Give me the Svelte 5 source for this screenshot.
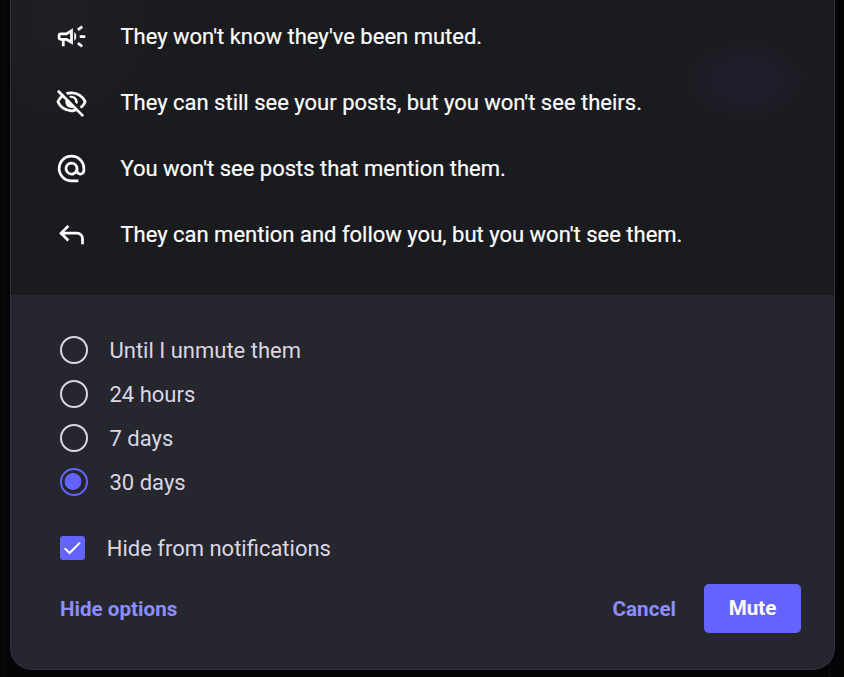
<script lang="ts">
  interface Info {
    text: string
    path: string
  }

  const infos: Info[] = [
    {
      text: "They won't know they've been muted.",
      path: 'M720-440v-80h160v80H720Zm48 280-128-96 48-64 128 96-48 64Zm-80-480-48-64 128-96 48 64-128 96ZM200-200v-160h-40q-33 0-56.5-23.5T80-440v-80q0-33 23.5-56.5T160-600h160l200-120v480L320-360h-40v160h-80Zm240-182v-196l-98 58H160v80h182l98 58Zm120 36v-268q27 24 43.5 58.5T620-480q0 41-16.5 75.5T560-346Z',
    },
    {
      text: "They can still see your posts, but you won't see theirs.",
      path: 'm644-428-58-58q9-47-27-88t-93-32l-58-58q17-8 34.5-12t37.5-4q75 0 127.5 52.5T660-500q0 20-4 37.5T644-428Zm128 126-58-56q38-29 67.5-63.5T832-500q-50-101-143.5-160.5T480-720q-29 0-57 4t-55 12l-62-62q41-17 84-25.5t90-8.5q151 0 269 83.5T920-500q-23 59-60.5 109.5T772-302Zm20 246L624-222q-35 11-70.5 16.5T480-200q-151 0-269-83.5T40-500q21-53 53-98.5t73-81.5L56-792l56-56 736 736-56 56ZM222-624q-29 26-53 57t-41 67q50 101 143.5 160.5T480-280q20 0 39-2.5t39-5.5l-36-38q-11 3-21 4.5t-21 1.5q-75 0-127.5-52.5T300-500q0-11 1.5-21t4.5-21l-84-82Z',
    },
    {
      text: "You won't see posts that mention them.",
      path: 'M480-80q-83 0-156-31.5T197-197q-54-54-85.5-127T80-480q0-83 31.5-156T197-763q54-54 127-85.5T480-880q83 0 156 31.5T763-763q54 54 85.5 127T880-480v58q0 59-40.5 100.5T740-280q-35 0-66-15t-52-43q-29 29-65.5 43.5T480-280q-83 0-141.5-58.5T280-480q0-83 58.5-141.5T480-680q83 0 141.5 58.5T680-480v58q0 26 17 44t43 18q26 0 43-18t17-44v-58q0-134-93-227t-227-93q-134 0-227 93t-93 227q0 134 93 227t227 93h200v80H480Zm0-280q50 0 85-35t35-85q0-50-35-85t-85-35q-50 0-85 35t-35 85q0 50 35 85t85 35Z',
    },
    {
      text: "They can mention and follow you, but you won't see them.",
      path: 'M760-200v-160q0-50-35-85t-85-35H273l144 144-57 56-240-240 240-240 57 56-144 144h367q83 0 141.5 58.5T840-360v160h-80Z',
    },
  ]

  const durations = ['Until I unmute them', '24 hours', '7 days', '30 days']

  let duration = $state('30 days')
  let hideNotifications = $state(true)
</script>

<div class="backdrop">
  <div class="modal">
    <div class="modal-top">
      {#each infos as info (info.text)}
        <div class="info">
          <svg viewBox="0 -960 960 960" aria-hidden="true"><path d={info.path} /></svg>
          <div>{info.text}</div>
        </div>
      {/each}
    </div>

    <div class="modal-bottom">
      <div class="durations">
        {#each durations as item}
          <label class="radio">
            <input type="radio" name="duration" value={item} bind:group={duration} />
            <span>{item}</span>
          </label>
        {/each}
      </div>

      <label class="checkbox">
        <input type="checkbox" bind:checked={hideNotifications} />
        <span class="box">
          {#if hideNotifications}
            <svg viewBox="0 0 25 24" aria-hidden="true"><path d="M4.7 12.3 9.6 17 20 6.6" /></svg>
          {/if}
        </span>
        <span>Hide from notifications</span>
      </label>

      <div class="actions">
        <button class="link">Hide options</button>
        <div class="spacer"></div>
        <button class="link">Cancel</button>
        <button class="primary">Mute</button>
      </div>
    </div>
  </div>
</div>

<style>
  :global(body) {
    background: #050507;
  }

  .backdrop {
    box-sizing: border-box;
    height: 677px;
    margin: 0 14px 0 4px;
    padding: 0 0 7px 5px;
    border: solid #0d0d11;
    border-width: 0 1px;
    font-family: Roboto, sans-serif;
    font-size: 22px;
    line-height: 33px;
  }

  .modal {
    box-sizing: border-box;
    display: flex;
    flex-direction: column;
    width: 825px;
    height: 670px;
    overflow: hidden;
    border: 1px solid #323042;
    border-top: 0;
    border-radius: 0 0 22px 22px;
    background: #26262f;
  }

  .modal-top {
    box-sizing: border-box;
    display: flex;
    flex-direction: column;
    gap: 33px;
    height: 295px;
    padding: 20px 44px;
    color: #fff;
    background:
      radial-gradient(ellipse 74px 48px at 735px 80px, #1f1d2c 0%, #1f1d2ccc 45%, #1f1d2c40 75%, transparent 100%),
      radial-gradient(ellipse 130px 140px at 50px 20px, #201e22, transparent),
      #1a1b1f;
  }

  .info {
    display: flex;
    align-items: center;
    gap: 32.4px;
    height: 33px;
    -webkit-text-stroke: 0.2px;
  }

  .info svg {
    width: 33px;
    height: 33px;
    fill: currentColor;
  }

  .modal-bottom {
    flex: 1;
    padding: 33px 33px 0 49px;
    color: #dad6e4;
  }

  .durations {
    display: flex;
    flex-direction: column;
  }

  .radio {
    display: flex;
    align-items: center;
    gap: 21.5px;
    height: 44px;
  }

  .radio input {
    appearance: none;
    box-sizing: border-box;
    width: 28px;
    height: 28px;
    margin: 0;
    border: 2px solid #dad6e4;
    border-radius: 50%;
  }

  .radio input:checked {
    border-color: #6364ff;
    background: radial-gradient(circle 9px at 11px 11.5px, #6364ff 8px, transparent 8.7px);
  }

  .checkbox {
    display: flex;
    align-items: center;
    gap: 21.7px;
    height: 33px;
    margin-top: 28px;
  }

  .checkbox input {
    appearance: none;
    width: 0;
    margin: 0 -21.7px 0 0;
  }

  .box {
    width: 25px;
    height: 24px;
    margin-bottom: 1px;
    border-radius: 3px;
    background: #6364ff;
  }

  .box svg {
    display: block;
    fill: none;
    stroke: #fff;
    stroke-width: 2;
  }

  .actions {
    display: flex;
    align-items: center;
    margin-top: 19px;
  }

  .spacer {
    flex: 1;
  }

  button {
    padding: 0;
    border: 0;
    background: none;
    font-family: inherit;
    font-size: 20.625px;
    font-weight: 700;
    line-height: 29px;
    cursor: pointer;
  }

  .link {
    padding-top: 2px;
    color: #8c8dff;
  }

  .primary {
    width: 97px;
    height: 49px;
    margin-left: 28px;
    border-radius: 5px;
    color: #fff;
    background: #6364ff;
  }
</style>
